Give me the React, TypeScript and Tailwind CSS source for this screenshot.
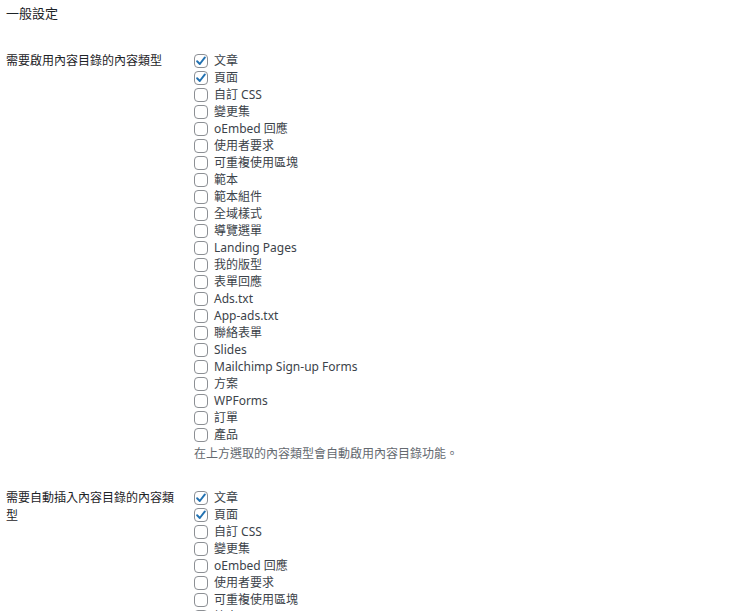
const types = [
  "文章",
  "頁面",
  "自訂 CSS",
  "變更集",
  "oEmbed 回應",
  "使用者要求",
  "可重複使用區塊",
  "範本",
  "範本組件",
  "全域樣式",
  "導覽選單",
  "Landing Pages",
  "我的版型",
  "表單回應",
  "Ads.txt",
  "App-ads.txt",
  "聯絡表單",
  "Slides",
  "Mailchimp Sign-up Forms",
  "方案",
  "WPForms",
  "訂單",
  "產品",
];

const checked = ["文章", "頁面"];

function Checkbox({ on }: { on: boolean }) {
  return (
    <span className="w-[14px] h-[14px] shrink-0 rounded-[4px] border border-[#8c8f94] bg-white flex items-center justify-center">
      {on && (
        <svg width="12" height="12" viewBox="0 0 20 20" fill="none">
          <path d="M3.5 10.5 L8 15 L16.5 4" stroke="#2271b1" strokeWidth="3.2" strokeLinecap="round" strokeLinejoin="round" />
        </svg>
      )}
    </span>
  );
}

function TypeList({ note }: { note?: string }) {
  return (
    <div className="flex flex-col">
      {types.map((t) => (
        <label key={t} className="h-[17px] flex items-center gap-[6px]">
          <Checkbox on={checked.includes(t)} />
          <span className="leading-[17px]">{t}</span>
        </label>
      ))}
      {note && <p className="mt-[2px] leading-[17px] text-[#646970]">{note}</p>}
    </div>
  );
}

export default function App() {
  return (
    <div
      className="min-h-screen bg-white text-[12px] text-[#3c434a] px-[6px] overflow-hidden"
      style={{ fontFamily: '"Noto Sans", "Noto Sans CJK TC", sans-serif' }}
    >
      <h2 className="pt-[5px] leading-[17px] text-[13px] text-[#1d2327]">一般設定</h2>

      {/* Enable types */}
      <div className="flex mt-[30px]">
        <div className="w-[188px] shrink-0 pr-[12px] leading-[17px] text-[#1d2327]">
          需要啟用內容目錄的內容類型
        </div>
        <TypeList note="在上方選取的內容類型會自動啟用內容目錄功能。" />
      </div>

      {/* Auto insert types */}
      <div className="flex mt-[27px]">
        <div className="w-[188px] shrink-0 pr-[12px] leading-[18px] text-[#1d2327]">
          需要自動插入內容目錄的內容類型
        </div>
        <TypeList />
      </div>
    </div>
  );
}
